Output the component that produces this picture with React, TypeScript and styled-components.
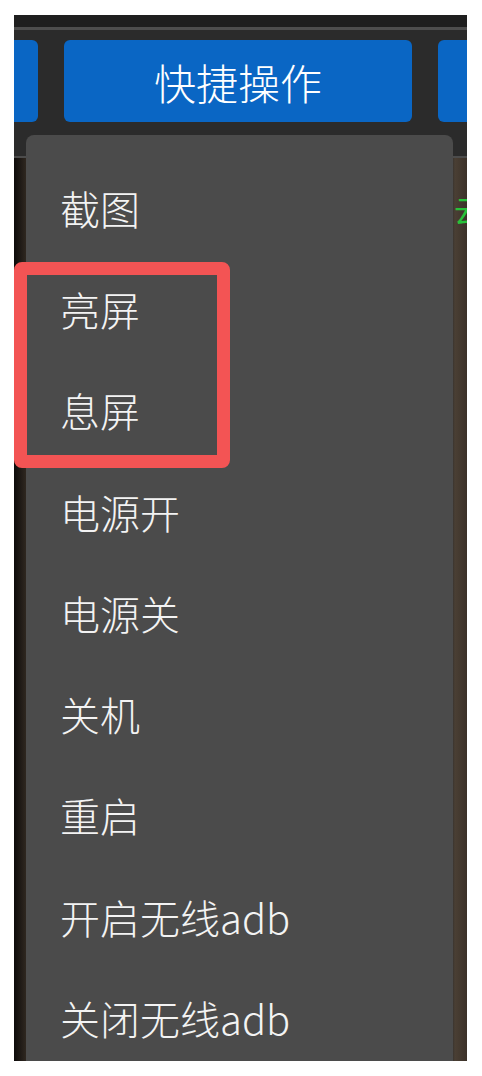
import React from 'react';
import styled, { createGlobalStyle } from 'styled-components';

const GlobalStyle = createGlobalStyle`
  html, body {
    margin: 0;
    padding: 0;
    background: #ffffff;
  }
  body {
    font-family: "Noto Sans CJK SC", "Noto Sans", sans-serif;
  }
`;

const Page = styled.div`
  width: 482px;
  height: 1076px;
  box-sizing: border-box;
  padding: 15px 15px 15px 14px;
  background: #ffffff;
`;

const Shot = styled.div`
  position: relative;
  width: 453px;
  height: 1046px;
  display: flex;
  flex-direction: column;
  overflow: hidden;
  background: #2b2b2b;
`;

const TitleStrip = styled.div`
  height: 12px;
  background: #1f1f1f;
  border-bottom: 3px solid #4e4e4e;
`;

const Toolbar = styled.div`
  height: 128px;
  box-sizing: border-box;
  padding-top: 10px;
  display: grid;
  grid-template-columns: 24px 348px 1fr;
  column-gap: 26px;
  align-items: start;
  border-bottom: 2px solid #4c4c4c;
`;

const ToolButton = styled.div<{ $cut?: 'left' | 'right' }>`
  height: 82px;
  display: flex;
  align-items: center;
  justify-content: center;
  background: #0a66c4;
  color: #ffffff;
  font-size: 42px;
  font-weight: 300;
  border-radius: ${p =>
    p.$cut === 'left' ? '0 6px 6px 0' : p.$cut === 'right' ? '6px 0 0 6px' : '6px'};
`;

const Scene = styled.div`
  position: relative;
  flex: 1;
  background:
    linear-gradient(90deg, #0d0b0a 0px, #2f2720 12px, #2b2b2b 12px, #2b2b2b 437px, #4a3f34 441px, #3b3129 453px),
    #2b2520;
`;

const SceneText = styled.span`
  position: absolute;
  left: 440px;
  top: 36px;
  color: #27c23a;
  font-size: 30px;
  line-height: 1;
  white-space: nowrap;
`;

const Menu = styled.div`
  position: absolute;
  top: 120px;
  left: 12px;
  width: 427px;
  bottom: -20px;
  box-sizing: border-box;
  padding: 22px 0 0 34px;
  background: #4b4b4b;
  border-radius: 8px;
  display: flex;
  flex-direction: column;
`;

const MenuItem = styled.div`
  height: 101.3px;
  display: flex;
  align-items: center;
  color: #f3f3f3;
  font-size: 40px;
  font-weight: 300;
  line-height: 1;
  white-space: nowrap;
`;

const Highlight = styled.div`
  position: absolute;
  left: 0;
  top: 247px;
  width: 216px;
  height: 206px;
  box-sizing: border-box;
  border: 13px solid #f35454;
  border-radius: 8px;
  pointer-events: none;
`;

const items = [
  '截图',
  '亮屏',
  '息屏',
  '电源开',
  '电源关',
  '关机',
  '重启',
  '开启无线adb',
  '关闭无线adb',
];

const App: React.FC = () => {
  return (
    <>
      <GlobalStyle />
      <Page>
        <Shot>
          <TitleStrip />
          <Toolbar>
            <ToolButton $cut="left" />
            <ToolButton>快捷操作</ToolButton>
            <ToolButton $cut="right" />
          </Toolbar>
          <Scene>
            <SceneText>云手</SceneText>
          </Scene>
          <Menu>
            {items.map(label => (
              <MenuItem key={label}>{label}</MenuItem>
            ))}
          </Menu>
          <Highlight />
        </Shot>
      </Page>
    </>
  );
};

export default App;
